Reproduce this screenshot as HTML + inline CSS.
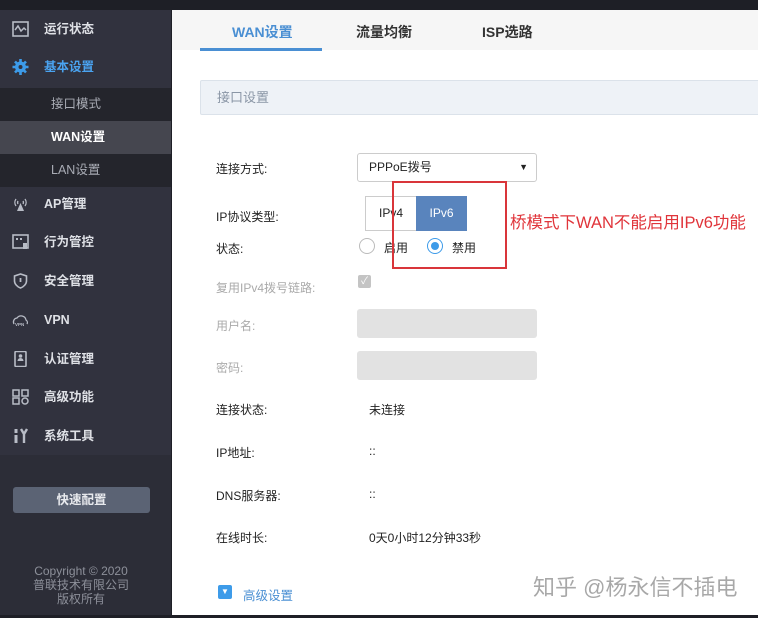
<!DOCTYPE html>
<html><head><meta charset="utf-8"><style>
*{margin:0;padding:0;box-sizing:border-box}
body{width:758px;height:618px;overflow:hidden;background:#1e1f26;font-family:"Liberation Sans","Noto Sans CJK SC",sans-serif;position:relative;font-size:12px}
.a{position:absolute}
#side{left:0;top:10px;width:171px;height:605px;background:#2c2d37}
.mi{position:absolute;left:0;width:171px;height:38px;color:#dfe1e6;font-size:12.5px;font-weight:bold;line-height:38px;padding-left:44px}
.ic{position:absolute;left:12px;top:11px;width:17px;height:16px}
.sub{position:absolute;left:0;width:171px;height:33px;line-height:33px;padding-left:51px;color:#a9acb5;font-size:12.5px;background:#24252c}
#main{left:172px;top:10px;width:586px;height:605px;background:#fff}
.lab{position:absolute;left:216px;font-size:12px;color:#222}
.val{position:absolute;left:369px;font-size:12px;color:#222}
.g{color:#aaa}
</style></head><body>
<div class="a" id="side">
 <div class="a" style="left:0;top:0;width:171px;height:445px;background:#31323e"></div>
 <div class="mi" style="top:0"><svg class="ic" viewBox="0 0 17 16"><rect x="1" y="1" width="15" height="14" fill="none" stroke="#b8bcc6" stroke-width="1.6"/><path d="M3 9l3-4 3 5 3-3 2 2" fill="none" stroke="#b8bcc6" stroke-width="1.5"/></svg>运行状态</div>
 <div class="mi" style="top:38px;color:#4aa3f0"><svg class="ic" viewBox="0 0 17 16"><circle cx="8.5" cy="8" r="5.5" fill="#3d9be9"/><circle cx="8.5" cy="8" r="2" fill="#31323e"/><path d="M8.5 0v16M0.5 8h16M3 2.5l11 11M14 2.5L3 13.5" stroke="#3d9be9" stroke-width="2.6"/><circle cx="8.5" cy="8" r="2" fill="#31323e"/></svg>基本设置</div>
 <div class="sub" style="top:78px">接口模式</div>
 <div class="sub" style="top:111px;background:#45464f;color:#fff;font-weight:bold">WAN设置</div>
 <div class="sub" style="top:144px">LAN设置</div>
 <div class="mi" style="top:175px"><svg class="ic" viewBox="0 0 17 16"><path d="M8.5 7L5 15h7z" fill="#b8bcc6"/><path d="M4 3a6 6 0 0 0 0 7M13 3a6 6 0 0 1 0 7M6 5a3 3 0 0 0 0 3M11 5a3 3 0 0 1 0 3" fill="none" stroke="#b8bcc6" stroke-width="1.3"/></svg>AP管理</div>
 <div class="mi" style="top:213px"><svg class="ic" viewBox="0 0 17 16"><rect x="1" y="1" width="15" height="13" fill="none" stroke="#b8bcc6" stroke-width="1.6"/><rect x="4" y="4" width="2" height="2" fill="#b8bcc6"/><rect x="8" y="4" width="2" height="2" fill="#b8bcc6"/><rect x="11" y="9" width="4" height="6" fill="#b8bcc6"/></svg>行为管控</div>
 <div class="mi" style="top:252px"><svg class="ic" viewBox="0 0 17 16"><path d="M8.5 1L2.5 3v5c0 3 3 6 6 7 3-1 6-4 6-7V3z" fill="none" stroke="#b8bcc6" stroke-width="1.6"/><path d="M8.5 5v4" stroke="#b8bcc6" stroke-width="1.8"/></svg>安全管理</div>
 <div class="mi" style="top:291px"><svg class="ic" viewBox="0 0 17 16"><path d="M2 12a4 4 0 0 1 3-6 5 5 0 0 1 9 2 3 3 0 0 1 1 4" fill="none" stroke="#b8bcc6" stroke-width="1.3"/><text x="3" y="14" font-size="4.5" fill="#b8bcc6" font-family="Liberation Sans">VPN</text></svg>VPN</div>
 <div class="mi" style="top:330px"><svg class="ic" viewBox="0 0 17 16"><rect x="3" y="0.5" width="11" height="15" rx="1" fill="none" stroke="#b8bcc6" stroke-width="1.6"/><circle cx="8.5" cy="5" r="1.8" fill="#b8bcc6"/><path d="M5.5 10a3 3 0 0 1 6 0z" fill="#b8bcc6"/></svg>认证管理</div>
 <div class="mi" style="top:368px"><svg class="ic" viewBox="0 0 17 16"><rect x="1" y="1" width="6" height="6" fill="none" stroke="#b8bcc6" stroke-width="1.5"/><rect x="10" y="1" width="6" height="6" fill="none" stroke="#b8bcc6" stroke-width="1.5"/><rect x="1" y="9" width="6" height="6" fill="none" stroke="#b8bcc6" stroke-width="1.5"/><circle cx="13" cy="12" r="3" fill="none" stroke="#b8bcc6" stroke-width="1.5"/></svg>高级功能</div>
 <div class="mi" style="top:407px"><svg class="ic" viewBox="0 0 17 16"><path d="M4 1v4M4 7v8" stroke="#b8bcc6" stroke-width="3"/><path d="M9 1l3 5 3-5M12 6v9" fill="none" stroke="#b8bcc6" stroke-width="2.4"/></svg>系统工具</div>
 <div class="a" style="left:13px;top:477px;width:137px;height:26px;background:#5b6374;border-radius:3px;color:#e8eaee;text-align:center;line-height:26px;font-size:12.5px;font-weight:bold">快速配置</div>
 <div class="a" style="left:0;top:554px;width:162px;text-align:center;color:#8d909a;font-size:12px;line-height:14px">Copyright © 2020<br>普联技术有限公司<br>版权所有</div>
</div>
<div class="a" id="main">
 <div class="a" style="left:0;top:0;width:586px;height:40px;background:#f6f6f6"></div>
 <div class="a" style="left:60px;top:12px;font-size:14px;color:#4a8fd3;font-weight:bold">WAN设置</div>
 <div class="a" style="left:28px;top:38px;width:122px;height:3px;background:#4a8fd3"></div>
 <div class="a" style="left:184px;top:12px;font-size:14px;color:#333;font-weight:bold">流量均衡</div>
 <div class="a" style="left:310px;top:12px;font-size:14px;color:#333;font-weight:bold">ISP选路</div>
 <div class="a" style="left:28px;top:70px;width:560px;height:35px;background:#eef2f7;border:1px solid #dbe2ea;border-radius:2px;color:#8a96a6;font-size:13px;line-height:33px;padding-left:16px">接口设置</div>
</div>
<div class="lab" style="top:160px">连接方式:</div>
<div class="a" style="left:357px;top:153px;width:180px;height:29px;border:1px solid #ccc;border-radius:3px;background:#fff;font-size:12px;line-height:27px;padding-left:11px;color:#222">PPPoE拨号<span style="position:absolute;right:8px;top:0;font-size:9px">▼</span></div>
<div class="lab" style="top:208px">IP协议类型:</div>
<div class="a" style="left:365px;top:196px;width:52px;height:35px;border:1px solid #ccc;background:#fff;text-align:center;line-height:33px;color:#222">IPv4</div>
<div class="a" style="left:416px;top:196px;width:51px;height:35px;background:#5984bd;text-align:center;line-height:35px;color:#fff">IPv6</div>
<div class="lab" style="top:240px">状态:</div>
<div class="a" style="left:359px;top:238px;width:16px;height:16px;border:1px solid #bbb;border-radius:50%"></div>
<div class="a" style="left:384px;top:239px;color:#222">启用</div>
<div class="a" style="left:427px;top:238px;width:16px;height:16px;border:1px solid #3d9be9;border-radius:50%"><div style="margin:3px;width:8px;height:8px;border-radius:50%;background:#3d9be9"></div></div>
<div class="a" style="left:452px;top:239px;color:#222">禁用</div>
<div class="a" style="left:392px;top:181px;width:115px;height:88px;border:2px solid #d9353a"></div>
<div class="a" style="left:510px;top:209px;color:#e0343a;font-size:16.5px">桥模式下WAN不能启用IPv6功能</div>
<div class="lab g" style="top:279px">复用IPv4拨号链路:</div>
<div class="a" style="left:358px;top:275px;width:13px;height:13px;background:#c4c4c4;border-radius:2px;color:#fff;font-size:10px;line-height:13px;text-align:center">✓</div>
<div class="lab g" style="top:317px">用户名:</div>
<div class="a" style="left:357px;top:309px;width:180px;height:29px;background:#e2e2e2;border-radius:3px"></div>
<div class="lab g" style="top:359px">密码:</div>
<div class="a" style="left:357px;top:351px;width:180px;height:29px;background:#e2e2e2;border-radius:3px"></div>
<div class="lab" style="top:401px">连接状态:</div><div class="val" style="top:401px">未连接</div>
<div class="lab" style="top:444px">IP地址:</div><div class="val" style="top:444px">::</div>
<div class="lab" style="top:487px">DNS服务器:</div><div class="val" style="top:487px">::</div>
<div class="lab" style="top:529px">在线时长:</div><div class="val" style="top:529px">0天0小时12分钟33秒</div>
<div class="a" style="left:218px;top:585px;width:14px;height:14px;background:#3d9be9;border-radius:2px;color:#fff;font-size:8px;text-align:center;line-height:14px">▼</div>
<div class="a" style="left:243px;top:585px;color:#4a8fd3;font-size:12.5px">高级设置</div>
<div class="a" style="left:533px;top:570px;color:#9a9a9a;font-size:22px;opacity:.85">知乎 @杨永信不插电</div>
</body></html>
